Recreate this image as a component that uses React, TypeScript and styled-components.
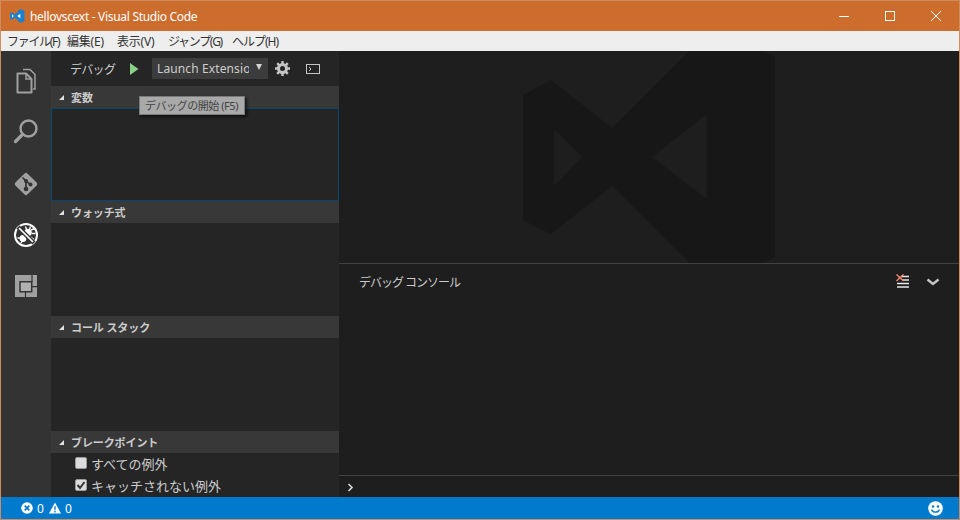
import React from "react";
import styled, { createGlobalStyle } from "styled-components";

const Global = createGlobalStyle`
  html, body { margin: 0; padding: 0; background: #1e1e1e; }
  * { box-sizing: border-box; }
`;

const FONT = `"Noto Sans", "Noto Sans CJK JP", sans-serif`;

const Win = styled.div`
  width: 960px;
  height: 520px;
  border: 1px solid #d08c5c;
  display: flex;
  flex-direction: column;
  font-family: ${FONT};
  overflow: hidden;
  position: relative;
`;
const TitleBar = styled.div`
  height: 30px;
  background: #cc6d2e;
  display: flex;
  align-items: center;
  padding-left: 8px;
  color: #fff;
  font-size: 12px;
  flex: none;
`;
const TitleText = styled.span`
  margin-left: 5px;
  letter-spacing: -0.3px;
  flex: 1;
`;
const WinBtn = styled.div`
  width: 46px;
  height: 30px;
  display: flex;
  align-items: center;
  justify-content: center;
`;
const MenuBar = styled.div`
  height: 20px;
  background: #eeeeee;
  color: #333;
  display: flex;
  align-items: center;
  font-size: 12px;
  padding-left: 6px;
  flex: none;
`;
const MenuItem = styled.div<{ $w: number; $ls: number }>`
  width: ${(p) => p.$w}px;
  white-space: nowrap;
  letter-spacing: ${(p) => p.$ls}px;
`;
const Main = styled.div`
  height: 446px;
  display: flex;
  flex: none;
`;
const Activity = styled.div`
  width: 50px;
  background: #333333;
  display: flex;
  flex-direction: column;
  align-items: center;
  flex: none;
  padding-top: 5px;
`;
const ActItem = styled.div<{ $h: number }>`
  width: 50px;
  height: ${(p) => p.$h}px;
  display: flex;
  align-items: center;
  justify-content: center;
  flex: none;
`;
const Side = styled.div`
  width: 288px;
  background: #252526;
  display: flex;
  flex-direction: column;
  flex: none;
  position: relative;
`;
const Toolbar = styled.div`
  height: 35px;
  display: flex;
  align-items: center;
  padding-left: 19px;
  color: #cccccc;
  font-size: 12px;
`;
const ToolLabel = styled.span`
  width: 59px;
  letter-spacing: -0.7px;
`;
const Play = styled.div`
  width: 23px;
  height: 35px;
  display: flex;
  align-items: center;
`;
const SelectBox = styled.div`
  width: 116px;
  height: 21px;
  background: #3c3c3c;
  color: #cccccc;
  font-size: 12px;
  line-height: 21px;
  padding-left: 5px;
  display: flex;
  position: relative;
`;
const SelectText = styled.span`
  width: 92px;
  overflow: hidden;
  white-space: nowrap;
  letter-spacing: 0.12px;
`;
const Caret = styled.span`
  position: absolute;
  right: 6px;
  top: 6px;
  width: 0;
  height: 0;
  border-left: 3.5px solid transparent;
  border-right: 3.5px solid transparent;
  border-top: 6px solid #d4d4d4;
`;
const ToolIcon = styled.div<{ $w: number }>`
  width: ${(p) => p.$w}px;
  height: 35px;
  display: flex;
  align-items: center;
  justify-content: center;
`;
const SectionHead = styled.div`
  height: 22px;
  background: #383838;
  display: flex;
  align-items: center;
  color: #cccccc;
  font-size: 11px;
  font-weight: 700;
  padding: 0 0 1px 8px;
  flex: none;
`;
const SectionLabel = styled.span`
  letter-spacing: -0.1px;
`;
const Twist = styled.span`
  width: 0;
  height: 0;
  border-left: 5px solid transparent;
  border-bottom: 5px solid #e0e0e0;
  margin: 1px 7px 0 0;
`;
const SectionBody = styled.div<{ $focus?: boolean }>`
  height: 93px;
  flex: none;
  border: ${(p) => (p.$focus ? "1px solid #094771" : "none")};
`;
const Breakpoints = styled.div`
  flex: 1;
  overflow: hidden;
  padding-left: 24px;
  margin-top: -1px;
`;
const BpRow = styled.div`
  height: 22px;
  display: flex;
  align-items: center;
  color: #cccccc;
  font-size: 13px;
  white-space: nowrap;
`;
const Check = styled.span`
  width: 12px;
  height: 12px;
  background: #dcdcdc;
  border: 1px solid #9a9a9a;
  border-radius: 2px;
  margin-right: 4px;
  display: flex;
  align-items: center;
  justify-content: center;
  flex: none;
`;
const Tooltip = styled.div`
  position: absolute;
  left: 88px;
  top: 45px;
  width: 106px;
  height: 19px;
  background: #a9a9a9;
  border: 1px solid #7a7a7a;
  box-shadow: 2px 2px 3px rgba(0, 0, 0, 0.6);
  color: #444444;
  font-size: 11px;
  line-height: 17px;
  padding-left: 5px;
  letter-spacing: -0.45px;
  white-space: nowrap;
`;
const Right = styled.div`
  flex: 1;
  display: flex;
  flex-direction: column;
  background: #1e1e1e;
  min-width: 0;
`;
const Editor = styled.div`
  height: 212px;
  flex: none;
  display: flex;
  align-items: center;
  justify-content: center;
  overflow: hidden;
`;
const Panel = styled.div`
  flex: 1;
  display: flex;
  flex-direction: column;
  border-top: 1px solid #414141;
`;
const PanelHead = styled.div`
  height: 35px;
  display: flex;
  align-items: center;
  padding: 0 11px 0 20px;
  color: #cccccc;
  font-size: 12px;
  flex: none;
`;
const PanelTitle = styled.span`
  flex: 1;
  letter-spacing: -1px;
`;
const PanelBtn = styled.div`
  width: 30px;
  height: 35px;
  display: flex;
  align-items: center;
  justify-content: center;
`;
const Output = styled.div`
  flex: 1;
`;
const InputRow = styled.div`
  height: 22px;
  border-top: 1px solid #414141;
  display: flex;
  align-items: center;
  padding: 2px 0 0 8px;
  flex: none;
`;
const Status = styled.div`
  height: 22px;
  background: #007acc;
  color: #fff;
  font-size: 12px;
  display: flex;
  align-items: center;
  padding: 0 16px 0 20px;
  flex: none;
`;
const Count = styled.span`
  margin: 0 5px 0 4px;
`;
const Spacer = styled.div`
  flex: 1;
`;

const A = "#a0a0a0";
const BG = "#333333";

const FilesIcon = () => (
  <svg width="24" height="26" viewBox="0 0 24 26" fill="none">
    <path d="M9 1.500h7l5 5v14.500h-2" stroke={A} strokeWidth="1.500" />
    <path d="M3.500 5.500h8.500l5.500 5.500v13.500h-14z" stroke={A} strokeWidth="2" strokeLinejoin="round" />
    <path d="M12 5.500v5.500h5.500" stroke={A} strokeWidth="1.500" />
  </svg>
);
const SearchIcon = () => (
  <svg width="26" height="26" viewBox="0 0 26 26" fill="none">
    <circle cx="15.500" cy="10.500" r="8" stroke={A} strokeWidth="2.400" />
    <path d="M9.500 16.500L2.500 23.500" stroke={A} strokeWidth="3.200" strokeLinecap="round" />
  </svg>
);
const GitIcon = () => (
  <svg width="26" height="26" viewBox="0 0 26 26">
    <rect x="4.500" y="4.500" width="17" height="17" rx="2" transform="rotate(45 13 13)" fill={A} />
    <path d="M9.500 6.500l3.500 3.500v8M13 9.500l4 4" stroke={BG} strokeWidth="1.700" fill="none" />
    <circle cx="13" cy="10" r="2" fill={BG} />
    <circle cx="13" cy="18" r="2.300" fill={BG} />
    <circle cx="17.500" cy="13.500" r="2" fill={BG} />
  </svg>
);
const DebugIcon = () => (
  <svg width="26" height="26" viewBox="0 0 26 26" fill="none">
    <circle cx="13" cy="13" r="11" stroke="#fff" strokeWidth="2" />
    <circle cx="15" cy="10.500" r="3.800" fill="#fff" />
    <path d="M12.500 4.500l1 3M17.500 4.500l-1 3M18 8l3.500-1.500M19 11.500h3.500M17.500 15l3.500 2.500" stroke="#fff" strokeWidth="1.400" />
    <circle cx="10" cy="16.500" r="3.400" fill="#fff" />
    <path d="M4.500 16h3M8 21l1.500-2.500" stroke="#fff" strokeWidth="1.400" />
    <path d="M5 5l16 16" stroke={BG} strokeWidth="4.500" />
    <path d="M6 6l14 14" stroke="#fff" strokeWidth="1.700" />
  </svg>
);
const ExtIcon = () => (
  <svg width="24" height="24" viewBox="0 0 24 24">
    <path d="M1 1h22v22h-22z" fill={A} />
    <path d="M6 7.700h11.700v10h-11.700z" fill="#b0b0b0" stroke={BG} strokeWidth="1.500" />
    <path d="M18 1v7M18 12.700h6M11.500 17.700v6" stroke={BG} strokeWidth="1.200" />
  </svg>
);

const VsLogo = () => (
  <svg width="16" height="16" viewBox="0 0 16 16">
    <path d="M1 5.200l2-1 3 2.400L11.300 1 15.500 2.800v10.400L11.300 15 6 9.400l-3 2.400-2-1z" fill="#1b80cf" />
    <path d="M3 6.300v3.400L4.800 8zM8.300 8l3 2.300V5.700z" fill="#fff" />
  </svg>
);
const Gear = () => (
  <svg width="15" height="15" viewBox="0 0 15 15">
    <circle cx="7.500" cy="7.500" r="4" fill="none" stroke="#c5c5c5" strokeWidth="3" />
    <path
      d="M7.500 0v3M7.500 12v3M0 7.500h3M12 7.500h3M2.200 2.200l2.100 2.100M10.700 10.700l2.100 2.100M2.200 12.800l2.100-2.100M10.700 4.300l2.100-2.100"
      stroke="#c5c5c5"
      strokeWidth="2.400"
    />
  </svg>
);

const Section = ({ label }: { label: string }) => (
  <SectionHead>
    <Twist />
    <SectionLabel>{label}</SectionLabel>
  </SectionHead>
);

export default function App() {
  return (
    <>
      <Global />
      <Win>
        <TitleBar>
          <VsLogo />
          <TitleText>hellovscext - Visual Studio Code</TitleText>
          <WinBtn>
            <svg width="10" height="10" viewBox="0 0 10 10">
              <path d="M0 5.500h10" stroke="#fff" />
            </svg>
          </WinBtn>
          <WinBtn>
            <svg width="10" height="10" viewBox="0 0 10 10">
              <rect x="0.500" y="0.500" width="9" height="9" fill="none" stroke="#fff" />
            </svg>
          </WinBtn>
          <WinBtn>
            <svg width="10" height="10" viewBox="0 0 10 10">
              <path d="M0 0l10 10M10 0L0 10" stroke="#fff" />
            </svg>
          </WinBtn>
        </TitleBar>
        <MenuBar>
          <MenuItem $w={60} $ls={-1.3}>ファイル(F)</MenuItem>
          <MenuItem $w={50} $ls={-0.2}>編集(E)</MenuItem>
          <MenuItem $w={51} $ls={-0.2}>表示(V)</MenuItem>
          <MenuItem $w={64} $ls={-1.3}>ジャンプ(G)</MenuItem>
          <MenuItem $w={60} $ls={-1}>ヘルプ(H)</MenuItem>
        </MenuBar>
        <Main>
          <Activity>
            <ActItem $h={50}><FilesIcon /></ActItem>
            <ActItem $h={50}><SearchIcon /></ActItem>
            <ActItem $h={56}><GitIcon /></ActItem>
            <ActItem $h={46}><DebugIcon /></ActItem>
            <ActItem $h={56}><ExtIcon /></ActItem>
          </Activity>
          <Side>
            <Toolbar>
              <ToolLabel>デバッグ</ToolLabel>
              <Play>
                <svg width="10" height="12" viewBox="0 0 10 12">
                  <path d="M1 0l8.500 6L1 12z" fill="#89d185" />
                </svg>
              </Play>
              <SelectBox>
                <SelectText>Launch Extension</SelectText>
                <Caret />
              </SelectBox>
              <ToolIcon $w={28}><Gear /></ToolIcon>
              <ToolIcon $w={34}>
                <svg width="14" height="10" viewBox="0 0 14 10" fill="none">
                  <rect x="0.500" y="0.500" width="13" height="9" stroke="#c5c5c5" />
                  <path d="M3 3l2 2-2 2" stroke="#c5c5c5" />
                </svg>
              </ToolIcon>
            </Toolbar>
            <Section label="変数" />
            <SectionBody $focus />
            <Section label="ウォッチ式" />
            <SectionBody />
            <Section label="コール スタック" />
            <SectionBody />
            <Section label="ブレークポイント" />
            <Breakpoints>
              <BpRow><Check />すべての例外</BpRow>
              <BpRow>
                <Check>
                  <svg width="10" height="10" viewBox="0 0 10 10">
                    <path d="M1.500 5l2.500 3 4.500-6" stroke="#333" strokeWidth="2" fill="none" />
                  </svg>
                </Check>
                キャッチされない例外
              </BpRow>
            </Breakpoints>
            <Tooltip>デバッグの開始 (F5)</Tooltip>
          </Side>
          <Right>
            <Editor>
              <svg width="252" height="212" viewBox="0 0 252 212" style={{ flex: "none" }}>
                <path
                  d="M0 44L28 29 89 77 166 0H240L252 5V206L240 212H166L89 135 28 183 0 169ZM31 78V135L59 106ZM184 63L129 106 184 148Z"
                  fill="#171717"
                  fillRule="evenodd"
                  stroke="#1b1b1b"
                />
              </svg>
            </Editor>
            <Panel>
              <PanelHead>
                <PanelTitle>デバッグ コンソール</PanelTitle>
                <PanelBtn>
                  <svg width="14" height="16" viewBox="0 0 14 16">
                    <path d="M5 2.500h8M6 6h7M1 9.500h12M1 13h12" stroke="#e8e8e8" strokeWidth="1.600" />
                    <path d="M0.500 0.500l7 6.500M7.500 0.500l-7 6.500" stroke="#f48771" strokeWidth="1.400" />
                  </svg>
                </PanelBtn>
                <PanelBtn>
                  <svg width="14" height="8" viewBox="0 0 14 8">
                    <path d="M1.500 1.500L7 6l5.500-4.500" stroke="#c5c5c5" strokeWidth="2.400" fill="none" />
                  </svg>
                </PanelBtn>
              </PanelHead>
              <Output />
              <InputRow>
                <svg width="7" height="9" viewBox="0 0 7 9">
                  <path d="M1.500 1L5 4.500 1.500 8" stroke="#d8d8d8" strokeWidth="1.600" fill="none" />
                </svg>
              </InputRow>
            </Panel>
          </Right>
        </Main>
        <Status>
          <svg width="12" height="12" viewBox="0 0 13 13">
            <circle cx="6.500" cy="6.500" r="6.300" fill="#fff" />
            <path d="M4 4l5 5M9 4l-5 5" stroke="#007acc" strokeWidth="1.800" />
          </svg>
          <Count>0</Count>
          <svg width="12" height="12" viewBox="0 0 13 12">
            <path d="M6.500 0L13 12H0z" fill="#fff" />
            <path d="M6.500 4v4M6.500 9v2" stroke="#007acc" strokeWidth="1.500" />
          </svg>
          <Count>0</Count>
          <Spacer />
          <svg width="15" height="15" viewBox="0 0 15 15">
            <circle cx="7.500" cy="7.500" r="7.300" fill="#fff" />
            <circle cx="5" cy="5.500" r="1.200" fill="#007acc" />
            <circle cx="10" cy="5.500" r="1.200" fill="#007acc" />
            <path d="M3.500 8.500c1 3.500 7 3.500 8 0" stroke="#007acc" strokeWidth="1.300" fill="none" />
          </svg>
        </Status>
      </Win>
    </>
  );
}
